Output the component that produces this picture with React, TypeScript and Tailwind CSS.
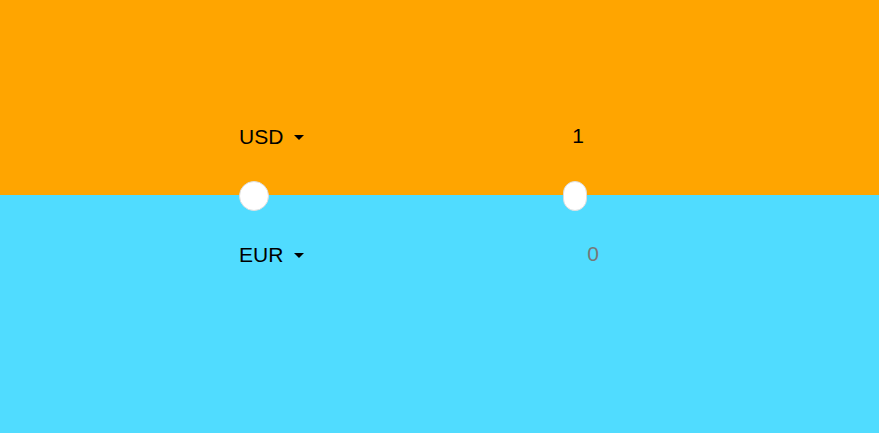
import React from "react";

export default function App() {
  return (
    <div className="relative w-[879px] h-[433px] flex flex-col font-['Liberation_Sans',Arial,sans-serif]">
      <div className="h-[195px] bg-[#ffa500] flex flex-col pl-[239px] pt-[123px]">
        <div className="flex items-center h-[28px] w-[360px]">
          <div className="flex items-center text-[21px] text-black">
            USD
            <span className="ml-[11px] w-0 h-0 border-l-[5px] border-r-[5px] border-t-[5px] border-l-transparent border-r-transparent border-t-black" />
          </div>
          <div className="ml-auto mr-[15px] -mt-[3px] text-[21px] text-black">1</div>
        </div>
      </div>
      <div className="flex-1 bg-[#50dcff] flex flex-col pl-[239px] pt-[46px]">
        <div className="flex items-center h-[28px] w-[360px]">
          <div className="flex items-center text-[21px] text-black">
            EUR
            <span className="ml-[11px] w-0 h-0 border-l-[5px] border-r-[5px] border-t-[5px] border-l-transparent border-r-transparent border-t-black" />
          </div>
          <div className="ml-auto -mt-[2px] text-[21px] text-[#777777]">0</div>
        </div>
      </div>
      <div className="absolute left-[239px] top-[181px] w-[30px] h-[30px] rounded-full bg-white border border-[#dddddd]" />
      <div className="absolute left-[563px] top-[181px] w-[24px] h-[30px] rounded-full bg-white border border-[#dddddd]" />
    </div>
  );
}
